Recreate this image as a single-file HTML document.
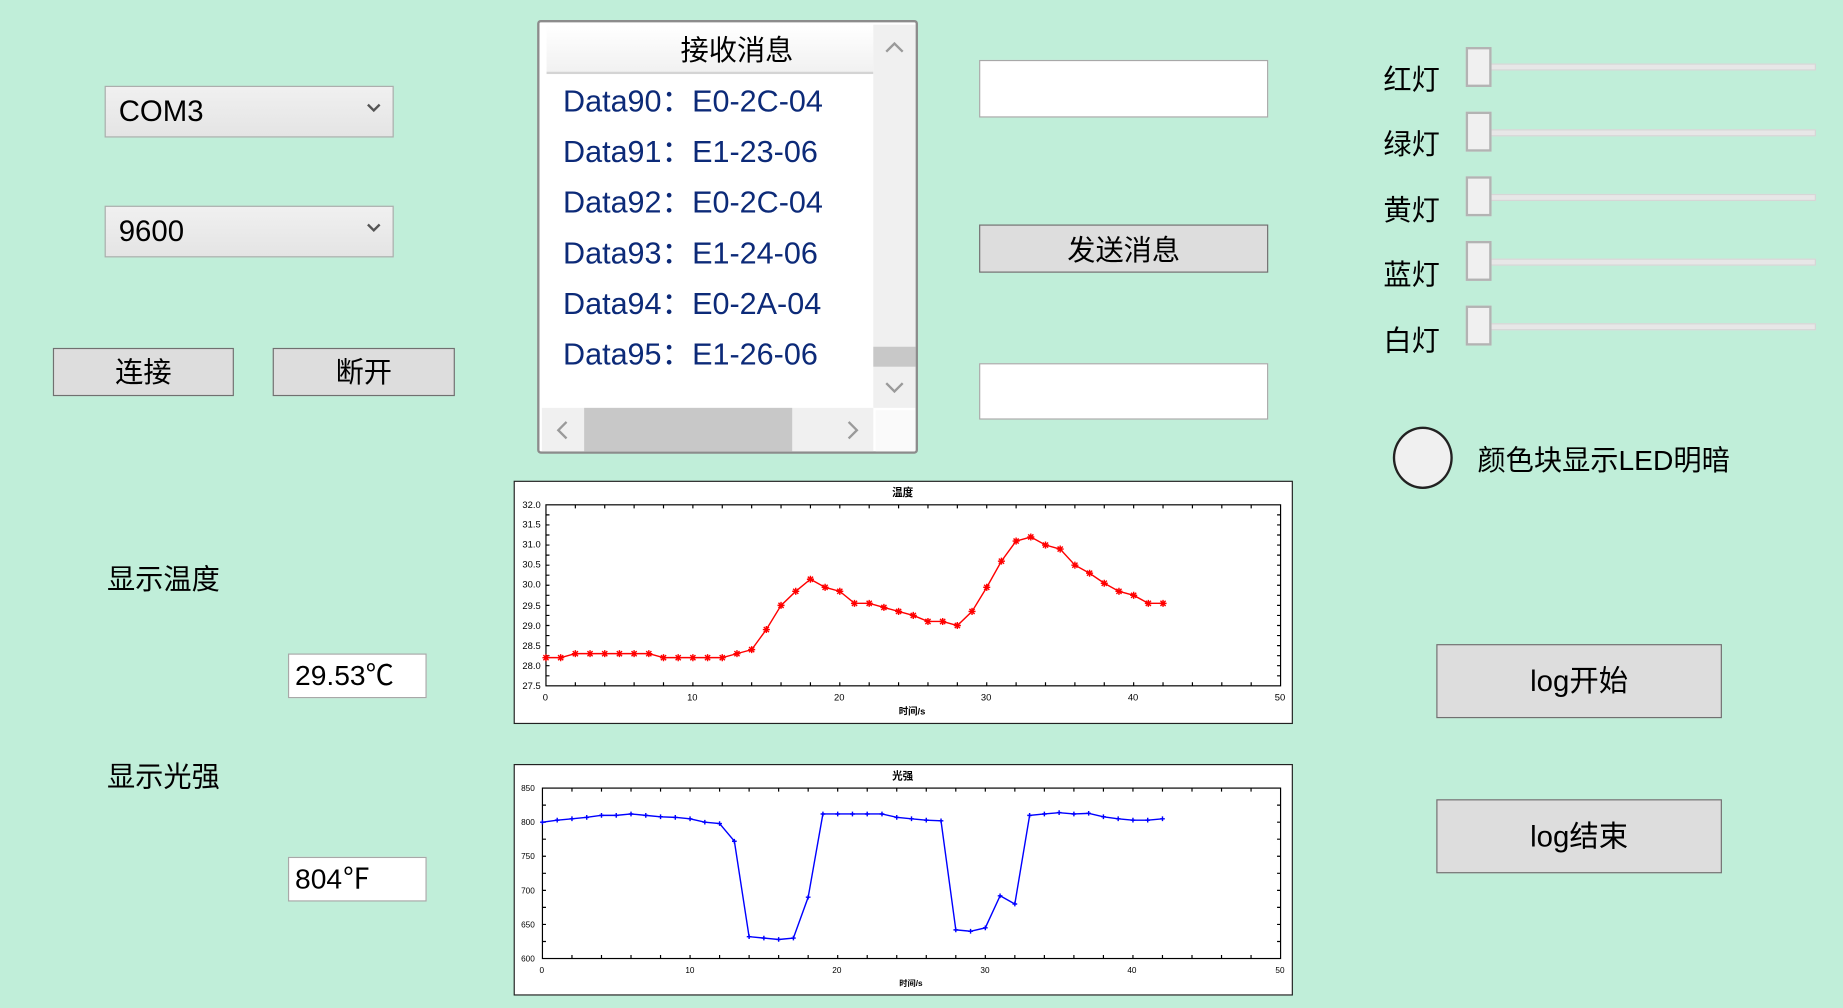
<!DOCTYPE html>
<html><head><meta charset="utf-8">
<style>
html,body{margin:0;padding:0;width:1843px;height:1008px;overflow:hidden;background:#c0eed9;}
#w{position:absolute;left:0;top:0;width:1568px;height:858px;transform:scale(1.17538);transform-origin:0 0;font-family:"Liberation Sans","Noto Sans CJK SC",sans-serif;color:#000;}
.a{position:absolute;box-sizing:border-box;}
.combo{background:linear-gradient(#f0f0f0,#e4e4e4);border:1px solid #acacac;font-size:25px;line-height:42px;padding-left:11px;}
.combo svg{position:absolute;right:10px;top:14px;}
.btn{background:#dddddd;border:1px solid #707070;font-size:24px;text-align:center;}
.tb{background:#fff;border:1px solid #a8a8a8;}
.lbl{position:absolute;font-size:24px;white-space:nowrap;}
.item{position:absolute;left:20px;font-size:26px;color:#0c2a78;white-space:nowrap;}
.track{position:absolute;left:1262px;width:283px;height:6px;background:#e7e7e7;border:1px solid #d6d6d6;box-sizing:border-box;}
.thumb{position:absolute;left:1247px;width:22px;height:34px;background:#f0f0f0;border:2px solid #b3b3b3;box-sizing:border-box;}
</style></head><body><div id="w">

<div class="a combo" style="left:89px;top:73px;width:246px;height:44px;">COM3<svg width="12" height="8"><path d="M1 1 L6 6 L11 1" stroke="#555" stroke-width="2" fill="none"/></svg></div>
<div class="a combo" style="left:89px;top:175px;width:246px;height:44px;">9600<svg width="12" height="8"><path d="M1 1 L6 6 L11 1" stroke="#555" stroke-width="2" fill="none"/></svg></div>
<div class="a btn" style="left:45px;top:296px;width:154px;height:41px;line-height:41px;">连接</div>
<div class="a btn" style="left:232px;top:296px;width:155px;height:41px;line-height:41px;">断开</div>

<div class="a" style="left:457px;top:17px;width:324px;height:369px;border:2px solid #8c8c8c;border-radius:3px;background:#fff;overflow:hidden;">
 <div class="a" style="left:6px;top:2px;width:278px;height:42px;background:linear-gradient(#fff,#f1f1f1);border-bottom:2px solid #d4d4d4;"></div>
 <div class="a" style="left:38px;top:4px;width:260px;font-size:24px;text-align:center;line-height:42px;">接收消息</div>
 <div class="item" style="top:47px;">Data90：E0-2C-04</div>
 <div class="item" style="top:90px;">Data91：E1-23-06</div>
 <div class="item" style="top:133px;">Data92：E0-2C-04</div>
 <div class="item" style="top:176px;">Data93：E1-24-06</div>
 <div class="item" style="top:219px;">Data94：E0-2A-04</div>
 <div class="item" style="top:262px;">Data95：E1-26-06</div>
 <div class="a" style="left:284px;top:2px;width:36px;height:326px;background:#f0f0f0;"></div>
 <div class="a" style="left:284px;top:276px;width:36px;height:17px;background:#c8c8c8;"></div>
 <svg class="a" style="left:294px;top:16px" width="16" height="10"><path d="M1 9 L8 2 L15 9" stroke="#9a9a9a" stroke-width="2" fill="none"/></svg>
 <svg class="a" style="left:294px;top:306px" width="16" height="10"><path d="M1 1 L8 8 L15 1" stroke="#9a9a9a" stroke-width="2" fill="none"/></svg>
 <div class="a" style="left:2px;top:328px;width:282px;height:37px;background:#f0f0f0;"></div>
 <div class="a" style="left:38px;top:328px;width:177px;height:37px;background:#c8c8c8;"></div>
 <svg class="a" style="left:14px;top:339px" width="10" height="16"><path d="M9 1 L2 8 L9 15" stroke="#9a9a9a" stroke-width="2" fill="none"/></svg>
 <svg class="a" style="left:262px;top:339px" width="10" height="16"><path d="M1 1 L8 8 L1 15" stroke="#9a9a9a" stroke-width="2" fill="none"/></svg>
 <div class="a" style="left:286px;top:330px;width:34px;height:37px;background:#fafafa;"></div>
</div>

<div class="a tb" style="left:833px;top:51px;width:246px;height:49px;"></div>
<div class="a btn" style="left:833px;top:191px;width:246px;height:41px;line-height:43px;">发送消息</div>
<div class="a tb" style="left:833px;top:309px;width:246px;height:48px;"></div>

<div class="lbl" style="left:1177px;top:48px;">红灯</div>
<div class="track" style="top:54px;"></div><div class="thumb" style="top:40px;"></div>
<div class="lbl" style="left:1177px;top:103px;">绿灯</div>
<div class="track" style="top:110px;"></div><div class="thumb" style="top:95px;"></div>
<div class="lbl" style="left:1177px;top:159px;">黄灯</div>
<div class="track" style="top:165px;"></div><div class="thumb" style="top:150px;"></div>
<div class="lbl" style="left:1177px;top:214px;">蓝灯</div>
<div class="track" style="top:220px;"></div><div class="thumb" style="top:205px;"></div>
<div class="lbl" style="left:1177px;top:270px;">白灯</div>
<div class="track" style="top:275px;"></div><div class="thumb" style="top:260px;"></div>

<div class="a" style="left:1185px;top:363px;width:51px;height:53px;border-radius:50%;border:2px solid #222;background:#f0f0f0;"></div>
<div class="lbl" style="left:1257px;top:372px;">颜色块显示LED明暗</div>

<div class="lbl" style="left:91px;top:473px;">显示温度</div>
<div class="a tb" style="left:245px;top:556px;width:118px;height:38px;font-size:24px;line-height:38px;padding-left:5px;">29.53℃</div>
<div class="lbl" style="left:91px;top:641px;">显示光强</div>
<div class="a tb" style="left:245px;top:729px;width:118px;height:38px;font-size:24px;line-height:38px;padding-left:5px;">804℉</div>

<div class="a btn" style="left:1222px;top:548px;width:243px;height:63px;line-height:63px;font-size:25px;">log开始</div>
<div class="a btn" style="left:1222px;top:680px;width:243px;height:63px;line-height:63px;font-size:25px;">log结束</div>

<svg class="a" style="left:0;top:0" width="1568" height="858" font-family="Liberation Sans, Noto Sans CJK SC, sans-serif">
 <rect x="437.5" y="409.5" width="662" height="206" fill="#fff" stroke="#222"/>
 <text x="768" y="422" font-size="9" text-anchor="middle" font-weight="bold">温度</text>
 <rect x="464.5" y="429.5" width="625" height="154" fill="none" stroke="#000"/>
 <g font-size="8" text-anchor="end">
  <text x="460" y="432">32.0</text><text x="460" y="449">31.5</text><text x="460" y="466">31.0</text><text x="460" y="483">30.5</text><text x="460" y="500">30.0</text><text x="460" y="518">29.5</text><text x="460" y="535">29.0</text><text x="460" y="552">28.5</text><text x="460" y="569">28.0</text><text x="460" y="586">27.5</text>
 </g>
 <g font-size="8" text-anchor="middle">
  <text x="464" y="596">0</text><text x="589" y="596">10</text><text x="714" y="596">20</text><text x="839" y="596">30</text><text x="964" y="596">40</text><text x="1089" y="596">50</text>
  <text x="776" y="608" font-weight="bold">时间/s</text>
 </g>
 <g id="tk1" stroke="#000" stroke-width="1"></g>
 <g id="tp" fill="none" stroke="#ff0000" stroke-width="1.2"></g>

 <rect x="437.5" y="650.5" width="662" height="196" fill="#fff" stroke="#222"/>
 <text x="768" y="663" font-size="9" text-anchor="middle" font-weight="bold">光强</text>
 <rect x="461.5" y="670.5" width="628" height="145" fill="none" stroke="#000"/>
 <g font-size="7" text-anchor="end">
  <text x="455" y="673">850</text><text x="455" y="702">800</text><text x="455" y="731">750</text><text x="455" y="760">700</text><text x="455" y="789">650</text><text x="455" y="818">600</text>
 </g>
 <g font-size="7" text-anchor="middle">
  <text x="461" y="828">0</text><text x="587" y="828">10</text><text x="712" y="828">20</text><text x="838" y="828">30</text><text x="963" y="828">40</text><text x="1089" y="828">50</text>
  <text x="775" y="839" font-weight="bold">时间/s</text>
 </g>
 <g id="tk2" stroke="#000" stroke-width="1"></g>
 <g id="lp" fill="none" stroke="#0000ff" stroke-width="1.2"></g>
</svg>
</div>
<script>
(function(){
var ns="http://www.w3.org/2000/svg";
var t=[28.2,28.2,28.3,28.3,28.3,28.3,28.3,28.3,28.2,28.2,28.2,28.2,28.2,28.3,28.4,28.9,29.5,29.85,30.15,29.95,29.85,29.55,29.55,29.45,29.35,29.25,29.1,29.1,29.0,29.35,29.95,30.6,31.1,31.2,31.0,30.9,30.5,30.3,30.05,29.85,29.75,29.55,29.55];
var l=[800,803,805,807,810,810,812,810,808,807,805,800,798,772,632,630,628,630,690,812,812,812,812,812,807,805,803,802,642,640,645,692,680,810,812,814,812,813,808,805,803,803,805];
function draw(id,arr,fx,fy,star){
 var g=document.getElementById(id),pts=[],s="";
 arr.forEach(function(v,i){var x=fx(i),y=fy(v);pts.push(x.toFixed(1)+","+y.toFixed(1));
  var r=star?3:2;
  s+="M"+(x-r)+" "+y+"h"+2*r+"M"+x+" "+(y-r)+"v"+2*r;
  if(star)s+="M"+(x-2.2)+" "+(y-2.2)+"l4.4 4.4M"+(x-2.2)+" "+(y+2.2)+"l4.4 -4.4";});
 var p=document.createElementNS(ns,"polyline");p.setAttribute("points",pts.join(" "));g.appendChild(p);
 var m=document.createElementNS(ns,"path");m.setAttribute("d",s);g.appendChild(m);
}
function ticks(id,x0,x1,y0,y1,nx,ny){
 var s="",i;
 for(i=1;i<nx;i++){var x=x0+(x1-x0)*i/nx;s+="M"+x+" "+y1+"v-3M"+x+" "+y0+"v3";}
 for(i=1;i<ny;i++){var y=y0+(y1-y0)*i/ny;s+="M"+x0+" "+y+"h3M"+x1+" "+y+"h-3";}
 var p=document.createElementNS(ns,"path");p.setAttribute("d",s);document.getElementById(id).appendChild(p);
}
ticks("tk1",464.5,1089.5,429.5,583.5,25,18);
ticks("tk2",461.5,1089.5,670.5,815.5,25,10);
draw("tp",t,function(i){return 464.5+i*12.5},function(v){return 583.5-(v-27.5)*34.22},true);
draw("lp",l,function(i){return 461.5+i*12.56},function(v){return 815.5-(v-600)*0.58},false);
})();
</script>
</body></html>
